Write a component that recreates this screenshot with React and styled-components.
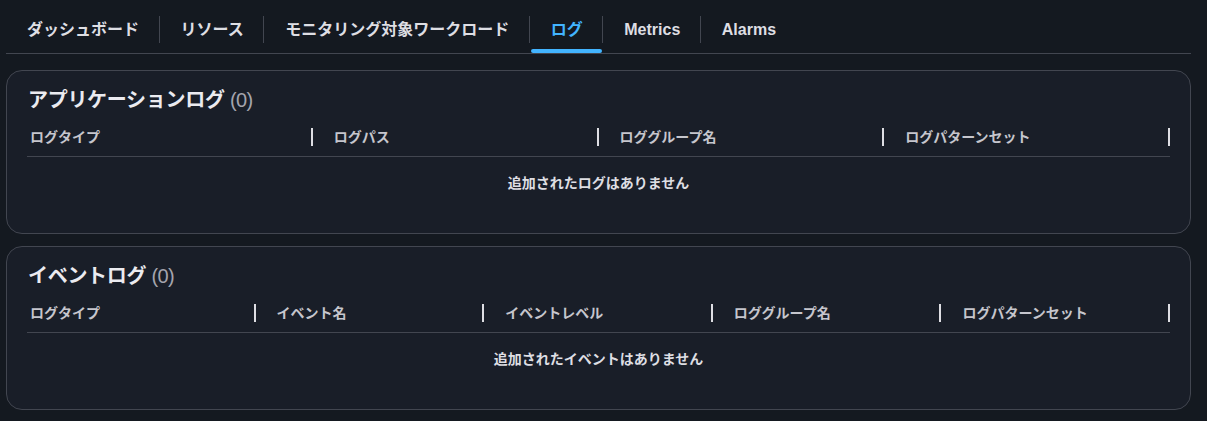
import React from "react";
import styled, { createGlobalStyle } from "styled-components";

const Global = createGlobalStyle`
  html, body {
    margin: 0;
    padding: 0;
    background: #141920;
    min-height: 100%;
  }
  body {
    font-family: "Liberation Sans", "Noto Sans CJK JP", sans-serif;
    color: #e9ebed;
    -webkit-font-smoothing: antialiased;
  }
`;

const Page = styled.div`
  padding: 0 16px 12px 6px;
  display: flex;
  flex-direction: column;
  gap: 16px;
`;

const TabStrip = styled.div`
  display: flex;
  align-items: center;
  height: 53px;
  border-bottom: 1px solid #424650;
`;

const Tab = styled.div`
  position: relative;
  height: 53px;
  box-sizing: border-box;
  display: flex;
  align-items: center;
  padding: 6px 19.5px 0 21px;
  font-size: 16px;
  line-height: 20px;
  font-weight: 700;
  color: ${(p) => (p.$active ? "#42b4ff" : "#dedee3")};
  white-space: nowrap;

  &::after {
    content: "";
    display: ${(p) => (p.$active ? "block" : "none")};
    position: absolute;
    left: 1px;
    right: 0;
    bottom: 0;
    height: 4px;
    border-radius: 4px;
    background: #42b4ff;
  }
`;

const TabSep = styled.span`
  width: 1px;
  height: 27px;
  margin-top: 6px;
  background: #424650;
  flex: none;
`;

const Stack = styled.div`
  display: flex;
  flex-direction: column;
  gap: 12px;
`;

const Card = styled.section`
  border: 1px solid #424650;
  border-radius: 16px;
  background: #191e28;
  padding: 17px 20px 40px 20px;
  display: flex;
  flex-direction: column;
`;

const Title = styled.h2`
  margin: 0 0 6px 1px;
  font-size: 20px;
  line-height: 24px;
  font-weight: 700;
  letter-spacing: -0.3px;
  color: #ebebf0;
`;

const Count = styled.span`
  font-weight: 400;
  color: #a4a4ad;
  letter-spacing: -0.6px;
`;

const HeaderRow = styled.div`
  display: grid;
  grid-template-columns: repeat(${(p) => p.$cols}, 1fr);
  height: 38px;
  border-bottom: 1px solid #424650;
`;

const HeaderCell = styled.div`
  display: flex;
  align-items: center;
  justify-content: space-between;
  padding-left: 21px;
  font-size: 14px;
  line-height: 18px;
  font-weight: 700;
  color: #c6c6cd;
  white-space: nowrap;

  &:first-child {
    padding-left: 3px;
  }
`;

const Resizer = styled.span`
  width: 2px;
  height: 18px;
  background: #dedee3;
  flex: none;
`;

const Empty = styled.div`
  margin-top: 16px;
  text-align: center;
  font-size: 14px;
  line-height: 20px;
  font-weight: 700;
  color: #dedee3;
`;

const tabs = ["ダッシュボード", "リソース", "モニタリング対象ワークロード", "ログ", "Metrics", "Alarms"];

function LogTable({ title, columns, empty }) {
  return (
    <Card>
      <Title>
        {title} <Count>(0)</Count>
      </Title>
      <HeaderRow $cols={columns.length}>
        {columns.map((c) => (
          <HeaderCell key={c}>
            <span>{c}</span>
            <Resizer />
          </HeaderCell>
        ))}
      </HeaderRow>
      <Empty>{empty}</Empty>
    </Card>
  );
}

export default function App() {
  return (
    <>
      <Global />
      <Page>
        <TabStrip>
          {tabs.map((t, i) => (
            <React.Fragment key={t}>
              {i > 0 && <TabSep />}
              <Tab $active={t === "ログ"}>{t}</Tab>
            </React.Fragment>
          ))}
        </TabStrip>
        <Stack>
          <LogTable
            title="アプリケーションログ"
            columns={["ログタイプ", "ログパス", "ロググループ名", "ログパターンセット"]}
            empty="追加されたログはありません"
          />
          <LogTable
            title="イベントログ"
            columns={["ログタイプ", "イベント名", "イベントレベル", "ロググループ名", "ログパターンセット"]}
            empty="追加されたイベントはありません"
          />
        </Stack>
      </Page>
    </>
  );
}
